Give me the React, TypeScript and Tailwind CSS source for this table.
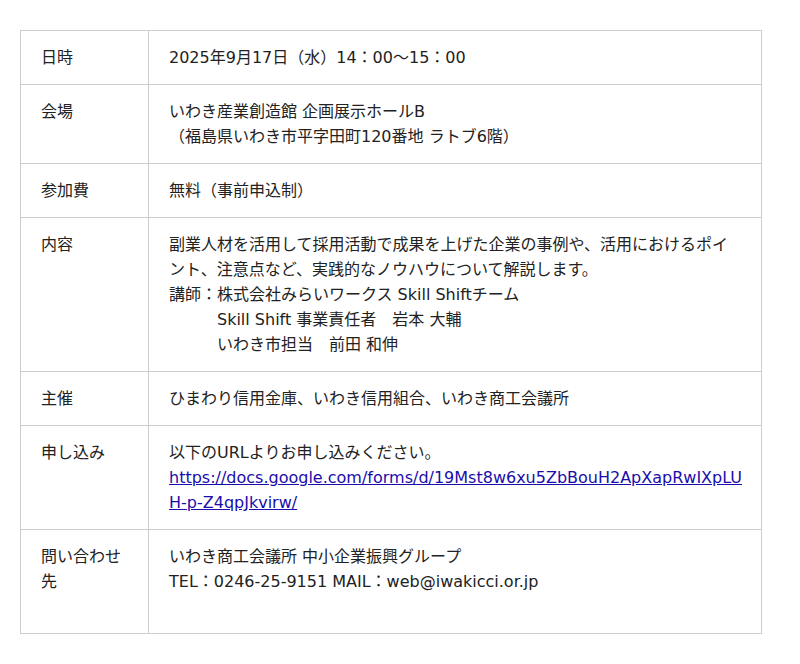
import React from "react";

type Row = {
  label: string;
  body: React.ReactNode;
};

const indent = "\u3000\u3000\u3000";

const rows: Row[] = [
  { label: "日時", body: "2025年9月17日（水）14：00〜15：00" },
  {
    label: "会場",
    body: (
      <>
        いわき産業創造館 企画展示ホールB
        <br />
        （福島県いわき市平字田町120番地 ラトブ6階）
      </>
    ),
  },
  { label: "参加費", body: "無料（事前申込制）" },
  {
    label: "内容",
    body: (
      <>
        副業人材を活用して採用活動で成果を上げた企業の事例や、活用におけるポイント、注意点など、実践的なノウハウについて解説します。
        <br />
        講師：株式会社みらいワークス Skill Shiftチーム
        <br />
        {indent + "Skill Shift 事業責任者\u3000岩本 大輔"}
        <br />
        {indent + "いわき市担当\u3000前田 和伸"}
      </>
    ),
  },
  { label: "主催", body: "ひまわり信用金庫、いわき信用組合、いわき商工会議所" },
  {
    label: "申し込み",
    body: (
      <>
        以下のURLよりお申し込みください。
        <br />
        <a href="#" className="text-[#1a0dab] underline break-all">
          https://docs.google.com/forms/d/19Mst8w6xu5ZbBouH2ApXapRwIXpLUH-p-Z4qpJkvirw/
        </a>
      </>
    ),
  },
  {
    label: "問い合わせ先",
    body: (
      <>
        いわき商工会議所 中小企業振興グループ
        <br />
        TEL：0246-25-9151 MAIL：web@iwakicci.or.jp
        <br />
        <br />
      </>
    ),
  },
];

export default function App() {
  return (
    <div
      className="min-h-screen bg-white pt-[30px] px-5 text-[16px] leading-[25px] text-[#222]"
      style={{ fontFamily: '"DejaVu Sans", "Noto Sans CJK JP", sans-serif' }}
    >
      <table className="w-[742px] border-collapse border border-[#ccc]">
        <tbody>
          {rows.map((r) => (
            <tr key={r.label} className="border-b border-[#ccc]">
              <td className="w-[128px] align-top border-r border-[#ccc] px-5 py-[14px]">
                {r.label}
              </td>
              <td className="align-top pl-5 pr-[18px] py-[14px] whitespace-pre-wrap">
                {r.body}
              </td>
            </tr>
          ))}
        </tbody>
      </table>
    </div>
  );
}
